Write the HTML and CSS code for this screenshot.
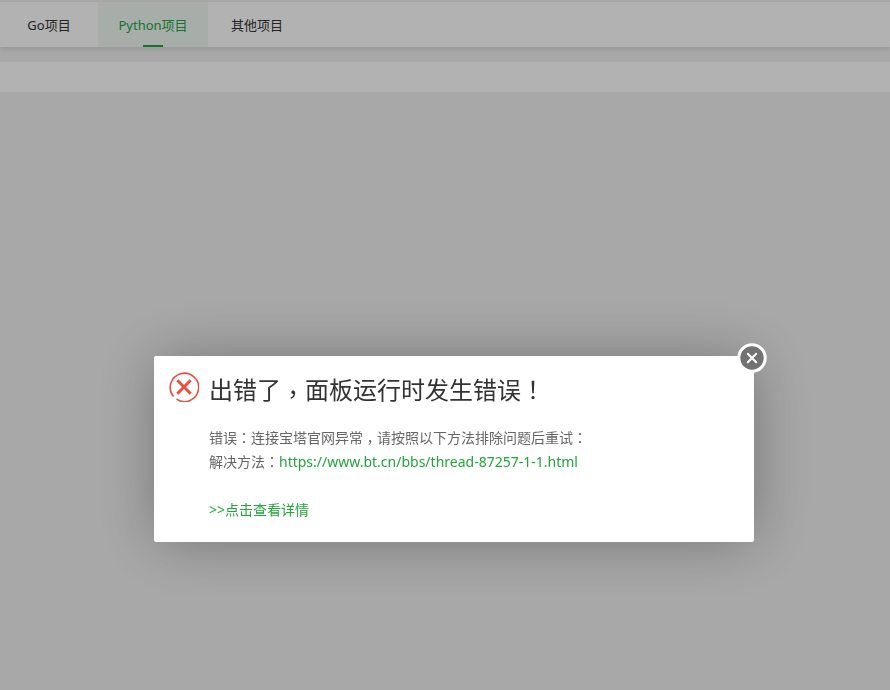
FILE: index.html
```html
<!DOCTYPE html>
<html lang="zh-CN">
<head>
    <meta charset="UTF-8">
    <meta name="viewport" content="width=device-width, initial-scale=1.0">
    <title>Python项目</title>
    <link rel="stylesheet" href="styles.css">
</head>
<body>
    <nav class="tab-nav">
        <a class="tab" href="#go">Go项目</a>
        <a class="tab active" href="#python">Python项目</a>
        <a class="tab" href="#other">其他项目</a>
    </nav>
    <div class="toolbar"></div>

    <!-- error dialog -->
    <div class="mask">
        <div class="dialog" role="dialog" aria-labelledby="error-title">
            <button class="close" type="button" aria-label="关闭">
                <svg width="30" height="30" viewBox="0 0 30 30">
                    <circle cx="15" cy="15" r="13.2" fill="#727272" stroke="#fff" stroke-width="3"/>
                    <path d="M10.8 10.8l8.4 8.4M19.2 10.8l-8.4 8.4" stroke="#fff" stroke-width="2" stroke-linecap="round"/>
                </svg>
            </button>
            <svg class="error-icon" width="30" height="30" viewBox="0 0 30 30" fill="none" stroke="#e9503f">
                <path d="M7.5 27.2A14.2 14.2 0 1 0 4.6 24.6" stroke-width="1.6"/>
                <path d="M8.3 8.3l13.4 13.4M21.7 8.3L8.3 21.7" stroke-width="3"/>
            </svg>
            <div class="content">
                <h1 id="error-title">出错了<span class="punct comma" lang="zh-TW">，</span>面板运行时发生错误<span class="punct" lang="zh-TW">！</span></h1>
                <p>错误<span class="punct" lang="zh-TW">：</span>连接宝塔官网异常<span class="punct comma" lang="zh-TW">，</span>请按照以下方法排除问题后重试<span class="punct" lang="zh-TW">：</span></p>
                <p>解决方法<span class="punct" lang="zh-TW">：</span><a href="https://www.bt.cn/bbs/thread-87257-1-1.html">https://www.bt.cn/bbs/thread-87257-1-1.html</a></p>
                <p class="more"><a href="#detail">&gt;&gt;点击查看详情</a></p>
            </div>
        </div>
    </div>
</body>
</html>
```

FILE: styles.css
```css
* {
    box-sizing: border-box;
}

body {
    margin: 0;
    padding-top: 2px;
    background: #f1f1f1;
    color: #333;
    font-family: "Noto Sans", "Noto Sans CJK SC", sans-serif;
    font-size: 13px;
}

a {
    color: #20a53a;
    text-decoration: none;
}

.tab-nav {
    display: flex;
    height: 45px;
    background: #fff;
    box-shadow: 0 2px 5px rgba(0, 0, 0, 0.1);
}

.tab {
    position: relative;
    min-width: 98px;
    height: 45px;
    padding: 0 20px;
    line-height: 47px;
    text-align: center;
    color: #333;
}

.tab.active {
    min-width: 110px;
    background: #f0f9f4;
    color: #20a53a;
}

/* short line under the current tab */
.tab.active::after {
    content: "";
    position: absolute;
    bottom: 0;
    left: 50%;
    width: 20px;
    height: 2px;
    margin-left: -10px;
    background: #20a53a;
}

.toolbar {
    height: 30px;
    margin-top: 15px;
    background: #fff;
}

.mask {
    position: fixed;
    inset: 0;
    display: flex;
    justify-content: center;
    align-items: flex-start;
    padding: 356px 0 0 18px;
    background: rgba(0, 0, 0, 0.3);
}

.dialog {
    position: relative;
    display: flex;
    gap: 10px;
    width: 600px;
    padding: 16px 15px 20px;
    border-radius: 2px;
    background: #fff;
    box-shadow: 1px 1px 60px rgba(0, 0, 0, 0.3);
}

.close {
    position: absolute;
    top: -13px;
    right: -13px;
    width: 30px;
    height: 30px;
    padding: 0;
    border: none;
    background: none;
    cursor: pointer;
}

.close svg,
.error-icon {
    display: block;
    flex-shrink: 0;
}

.content {
    color: #666;
    font-size: 14px;
    line-height: 24px;
}

.content h1 {
    margin: 0 0 18px;
    color: #333;
    font-size: 24px;
    font-weight: 400;
    line-height: 36px;
}

.content p {
    margin: 0;
}

.content .more {
    margin-top: 24px;
}

/* full-width marks sit in the middle of their box */
.punct {
    font-family: "Noto Sans CJK TC", sans-serif;
    line-height: 1;
}

.comma {
    vertical-align: -4px;
}
```
